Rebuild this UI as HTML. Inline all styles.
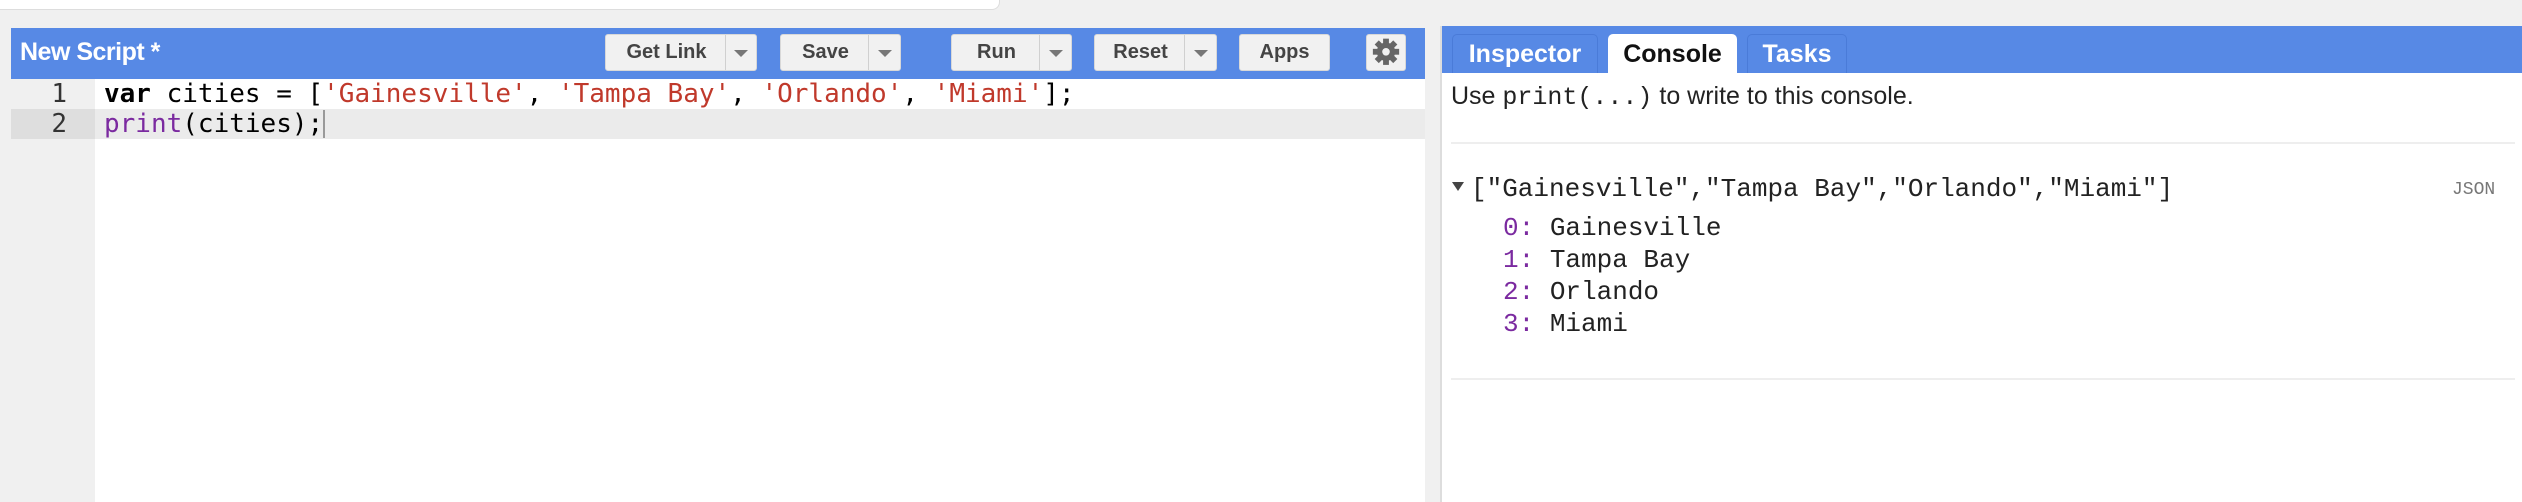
<!DOCTYPE html>
<html><head><meta charset="utf-8"><style>
*{margin:0;padding:0;box-sizing:border-box}
body{width:2522px;height:502px;background:#f0f0f0;position:relative;overflow:hidden;font-family:"Liberation Sans",Roboto,sans-serif}
.abs{position:absolute}
.topwhite{left:0;top:0;width:1000px;height:10px;background:#fff;border-bottom-right-radius:8px;border-bottom:1px solid #ddd;border-right:1px solid #ddd}
.lblue{left:11px;top:28px;width:1414px;height:51px;background:#5789e5}
.title{left:20px;top:38px;color:#fff;font-weight:bold;font-size:25px;letter-spacing:-0.5px}
.btn{top:34px;height:37px;background:#f1f1f1;border:1px solid #d8d8d8;border-radius:3px;color:#444;font-weight:bold;font-size:20px;line-height:35px;text-align:center}
.btn .dd{position:absolute;right:0;top:0;bottom:0;border-left:1px solid #d0d0d0}
.btn .dd:after{content:"";position:absolute;left:50%;top:15px;margin-left:-7px;border-left:7px solid transparent;border-right:7px solid transparent;border-top:7px solid #777}
.code{left:11px;top:79px;width:1414px;height:423px;background:#fff}
.gutter{left:11px;top:79px;width:84px;height:423px;background:#f0f0f0}
.ln{font-family:"DejaVu Sans Mono",monospace;font-size:26px;height:30px;line-height:30px}
.num{width:84px;text-align:right;padding-right:28px;color:#333}
.mono{font-family:"Liberation Mono","DejaVu Sans Mono",monospace}
.rblue{left:1442px;top:26px;width:1080px;height:47px;background:#5789e5}
.tab{top:34px;height:39px;border:1px solid #4a7bd8;border-bottom:none;border-radius:5px 5px 0 0;color:#fff;font-weight:bold;font-size:25px;line-height:38px;text-align:center;background:#5789e5}
.right{left:1442px;top:73px;width:1080px;height:429px;background:#fff}
</style></head><body>
<div class="abs topwhite"></div>
<div class="abs lblue"></div>
<div class="abs title">New Script *</div>
<div class="abs btn" style="left:605px;width:152px"><span style="position:absolute;left:0;width:121px">Get Link</span><span class="dd" style="width:31px"></span></div>
<div class="abs btn" style="left:780px;width:121px"><span style="position:absolute;left:0;width:89px">Save</span><span class="dd" style="width:32px"></span></div>
<div class="abs btn" style="left:951px;width:121px"><span style="position:absolute;left:0;width:89px">Run</span><span class="dd" style="width:32px"></span></div>
<div class="abs btn" style="left:1094px;width:123px"><span style="position:absolute;left:0;width:91px">Reset</span><span class="dd" style="width:32px"></span></div>
<div class="abs btn" style="left:1239px;width:91px">Apps</div>
<div class="abs btn" style="left:1366px;width:40px">
<svg width="38" height="35" viewBox="0 0 24 24" style="position:absolute;left:0;top:0"><g transform="translate(12,11.5)" fill="#666"><circle r="6.3"/><g id="t"><rect x="-2" y="-9" width="4" height="4"/></g><use href="#t" transform="rotate(45)"/><use href="#t" transform="rotate(90)"/><use href="#t" transform="rotate(135)"/><use href="#t" transform="rotate(180)"/><use href="#t" transform="rotate(225)"/><use href="#t" transform="rotate(270)"/><use href="#t" transform="rotate(315)"/><circle r="2.6" fill="#f1f1f1"/></g></svg></div>
<div class="abs code"></div>
<div class="abs gutter"></div>
<div class="abs" style="left:11px;top:109px;width:1414px;height:30px;background:#ebebeb"></div>
<div class="abs" style="left:11px;top:109px;width:84px;height:30px;background:#dedede"></div>
<div class="abs ln num" style="left:11px;top:79px">1</div>
<div class="abs ln num" style="left:11px;top:109px">2</div>
<div class="abs ln" style="left:104px;top:79px;white-space:pre;color:#000"><b>var</b> cities = [<span style="color:#c0392b">'Gainesville'</span>, <span style="color:#c0392b">'Tampa Bay'</span>, <span style="color:#c0392b">'Orlando'</span>, <span style="color:#c0392b">'Miami'</span>];</div>
<div class="abs ln" style="left:104px;top:109px;white-space:pre;color:#000"><span style="color:#7b2aa0">print</span>(cities);</div>
<div class="abs" style="left:323px;top:110px;width:2px;height:28px;background:#999"></div>
<div class="abs" style="left:1440px;top:26px;width:2px;height:476px;background:#ddd"></div>
<div class="abs rblue"></div>
<div class="abs tab" style="left:1452px;width:146px">Inspector</div>
<div class="abs tab" style="left:1608px;width:129px;background:#fff;color:#111;border-color:#fff">Console</div>
<div class="abs tab" style="left:1747px;width:100px">Tasks</div>
<div class="abs right"></div>
<div class="abs" style="left:1451px;top:82px;font-size:25px;color:#222;white-space:pre">Use <span class="mono" style="font-size:25px">print(...)</span> to write to this console.</div>
<div class="abs" style="left:1451px;top:142px;width:1064px;height:2px;background:#eee"></div>
<div class="abs" style="left:1452px;top:182px;border-left:6px solid transparent;border-right:6px solid transparent;border-top:9px solid #444"></div>
<div class="abs mono" style="left:1471px;top:174px;font-size:26px;color:#222;white-space:pre">["Gainesville","Tampa Bay","Orlando","Miami"]</div>
<div class="abs mono" style="left:2452px;top:180px;font-size:18px;color:#777">JSON</div>
<div class="abs mono" style="left:1503px;top:212px;font-size:26px;line-height:32px;color:#222;white-space:pre"><span style="color:#7b2aa0">0:</span> Gainesville
<span style="color:#7b2aa0">1:</span> Tampa Bay
<span style="color:#7b2aa0">2:</span> Orlando
<span style="color:#7b2aa0">3:</span> Miami</div>
<div class="abs" style="left:1451px;top:378px;width:1064px;height:2px;background:#eee"></div>
</body></html>
